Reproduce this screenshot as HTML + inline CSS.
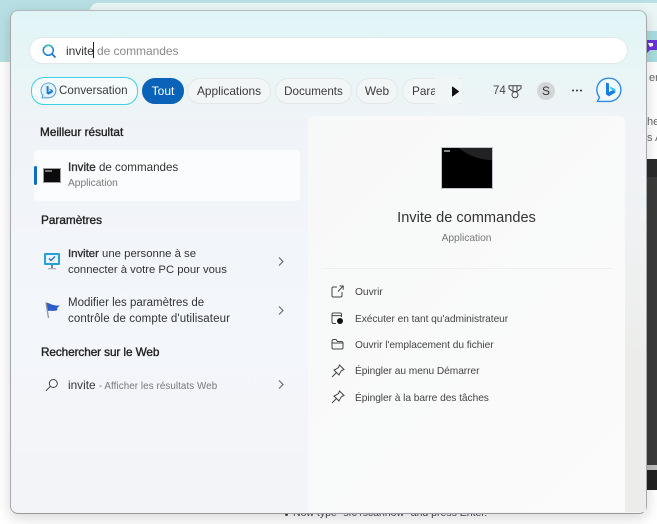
<!DOCTYPE html>
<html><head><meta charset="utf-8">
<style>
html,body{margin:0;padding:0}
body{width:657px;height:524px;overflow:hidden;position:relative;background:#fff;font-family:"Liberation Sans",sans-serif;color:#222}
#p{position:absolute;left:0;top:0;width:657px;height:524px;overflow:hidden;filter:blur(.35px)}
.a{position:absolute;white-space:nowrap}
.win{position:absolute;left:10px;top:10px;border-radius:8px;border:1px solid #b4b8b8;border-bottom-color:#9a9a9a;border-left-color:#a8a8a8;border-right-color:#a8a8a8;box-sizing:border-box;width:637px;height:504px;
background:linear-gradient(180deg,#e0f5f7 0%,#e9f5f6 12%,#f0f3f7 24%,#f3f6fb 60%,#f3f4f7 100%);box-shadow:0 4px 14px rgba(0,0,0,.16)}
.pill{position:absolute;top:78px;height:26px;border-radius:13px;border:1px solid #e4e7e8;box-sizing:border-box;font-size:11.8px;line-height:25px;text-align:center;color:#3a3a3a;background:#f3f6f7}
.t{font-size:11.5px;color:#333;line-height:16px}
.h{font-size:11.8px;color:#222;-webkit-text-stroke:.35px #222}
.b{-webkit-text-stroke:.35px #2b2b2b}
.m{font-size:10.2px;color:#444}
</style></head><body><div id="p">
<div class="a" style="left:0;top:0;width:657px;height:62px;background:#b8e0e4"></div>
<div class="a" style="left:90px;top:3px;width:567px;height:30px;background:#eaf6f6;border-radius:8px 0 0 0"></div>
<div class="a" style="left:640px;top:31px;width:17px;height:31px;background:#a9dde0"></div>
<svg class="a" style="left:645px;top:39px" width="12" height="15" viewBox="0 0 12 15"><path d="M1 1H12V11H5L2 14Z" fill="#6a35d8"/><path d="M3 4H8V7L5 8Z" fill="#fff"/></svg>
<div class="a" style="left:649px;top:72px;font-size:11px;color:#666">er</div>
<div class="a" style="left:647px;top:116px;font-size:11px;color:#666">he</div>
<div class="a" style="left:647px;top:132px;font-size:11px;color:#666">s A</div>
<div class="a" style="left:646px;top:159px;width:11px;height:306px;background:#3b3b3b"></div>
<div class="a" style="left:646px;top:159px;width:11px;height:18px;background:#2b2b2b"></div>
<div class="a" style="left:646px;top:465px;width:11px;height:5px;background:#bdbdbd"></div>
<div class="a" style="left:646px;top:470px;width:11px;height:20px;background:#222"></div>
<div class="a" style="left:285px;top:513px;width:3px;height:3px;border-radius:50%;background:#445"></div>
<div class="a" style="left:293px;top:507px;font-size:10.5px;color:#445">Now type "sfc /scannow" and press Enter.</div>

<div class="win"></div>
<div class="a" style="left:625px;top:116px;width:21px;height:396px;background:linear-gradient(180deg,rgba(236,238,236,0),#ecedeb 60%)"></div>

<!-- search box -->
<div class="a" style="left:30px;top:38px;width:597px;height:25px;background:#fff;border-radius:13px;box-shadow:0 0 0 1px #dfe9ea"></div>
<svg class="a" style="left:41px;top:43px" width="16" height="16" viewBox="0 0 16 16" fill="none"><circle cx="7.3" cy="7.3" r="5" stroke="#1a82d8" stroke-width="1.5"/><path d="M3.6 4A5 5 0 0 1 11 4" stroke="#35c0a5" stroke-width="1.5"/><path d="M11 11L14.5 14.5" stroke="#1a70d0" stroke-width="1.6"/></svg>
<div class="a" style="left:66px;top:42px;font-size:12px;line-height:14px;color:#8a8a8a;letter-spacing:-.05px"><span style="color:#333">invite</span><span style="display:inline-block;width:1px;height:16px;background:#222;vertical-align:-3px;margin-left:-1px"></span> de commandes</div>

<!-- pills -->
<div class="pill" style="left:31px;top:77px;width:107px;height:28px;border:1.5px solid #3fd0e6;line-height:26px;background:#f5fafb;text-align:left;padding-left:27px;font-size:11.6px;letter-spacing:.02px">Conversation</div>
<svg class="a" style="left:40px;top:82px" width="17" height="18" viewBox="0 0 17 18" fill="none"><path d="M8.5 1A7.4 7.4 0 1 1 8.5 15.8H2L3 13.5A7.4 7.4 0 0 1 8.5 1Z" fill="#e4f2fb" stroke="#5aa2e8" stroke-width="1.1"/><path d="M6.6 3.8L8.6 4.5V10L11.2 8.6L9.7 7.9L9.2 6.6L12.8 8.2V10.3L8.6 12.6L6.6 11.5Z" fill="#1a78d6"/></svg>
<div class="pill" style="left:142px;width:42px;background:#0a63b8;border-color:#0a63b8;color:#fff;font-size:12px">Tout</div>
<div class="pill" style="left:187px;width:84px;font-size:11.9px">Applications</div>
<div class="pill" style="left:275px;width:77px;font-size:11.6px">Documents</div>
<div class="pill" style="left:356px;width:42px;font-size:11.9px">Web</div>
<div class="pill" style="left:402px;width:60px;border-right:none;border-radius:13px 0 0 13px;text-align:left;padding-left:9px;overflow:hidden">Para</div>
<div class="a" style="left:435px;top:76px;width:24px;height:30px;background:#f0f5f6"></div>
<svg class="a" style="left:451px;top:86px" width="10" height="11" viewBox="0 0 10 11"><path d="M1.5 1L7.5 5.5L1.5 10Z" fill="#111" stroke="#111" stroke-linejoin="round"/></svg>
<div class="a" style="left:493px;top:85px;font-size:11.5px;color:#444">74</div>
<svg class="a" style="left:508px;top:85px" width="14" height="14" viewBox="0 0 14 14" fill="none" stroke="#444" stroke-width="1"><path d="M1 .8H13V3.5L9 6.5H5L1 3.5ZM5 1V6M9 1V6"/><circle cx="7" cy="9.8" r="3"/></svg>
<div class="a" style="left:537px;top:82px;width:18px;height:18px;border-radius:50%;background:#d3d6d7;text-align:center;font-size:12px;line-height:18px;color:#333">S</div>
<svg class="a" style="left:571px;top:88px" width="12" height="5"><circle cx="2" cy="2.5" r="1" fill="#333"/><circle cx="6" cy="2.5" r="1" fill="#333"/><circle cx="10" cy="2.5" r="1" fill="#333"/></svg>
<svg class="a" style="left:596px;top:77px" width="26" height="27" viewBox="0 0 26 27" fill="none"><path d="M13.3 1.2A11.6 11.6 0 1 1 13.3 24.4H1.5L3.6 20.3A11.6 11.6 0 0 1 13.3 1.2Z" fill="#f2f9fc" stroke="#2d8ce8" stroke-width="1.4"/><path d="M10 5.5L13 6.5V15L17 13L14.8 12L14 9.8L19.5 12.3V15.5L13 19.2L10 17.5Z" fill="#1a7fe0"/><path d="M14 9.8L19.5 12.3V15.5L17 13L14.8 12Z" fill="#33c6e8"/></svg>

<!-- left -->
<div class="a h" style="left:40px;top:125px">Meilleur résultat</div>
<div class="a" style="left:34px;top:150px;width:266px;height:51px;background:rgba(255,255,255,.7);border-radius:4px"></div>
<div class="a" style="left:34px;top:166px;width:2.5px;height:19px;background:#0f6cc4;border-radius:2px"></div>
<div class="a" style="left:43px;top:168px;width:18px;height:15px;background:#0b0b0b;border:1px solid #9a9da0;box-sizing:border-box"></div>
<div class="a" style="left:45px;top:170px;width:7px;height:2px;background:#777"></div>
<div class="a t" style="left:68px;top:160px;font-size:11.6px"><span class="b">Invite</span> de commandes</div>
<div class="a" style="left:68px;top:178px;font-size:10.2px;color:#777">Application</div>

<div class="a h" style="left:41px;top:213px">Paramètres</div>
<svg class="a" style="left:43px;top:252px" width="18" height="18" viewBox="0 0 18 18"><rect x="1" y="1" width="16" height="12" rx="1" fill="#27a0d8"/><rect x="3" y="3" width="12" height="8" fill="#e9f2f8"/><path d="M6 6.5L8 8.5L12 4.5" stroke="#1a70c0" stroke-width="1.3" fill="none"/><rect x="8" y="13" width="2" height="3" fill="#7a8a95"/><rect x="5" y="16" width="8" height="1.3" fill="#a8b2ba"/></svg>
<div class="a t" style="left:68px;top:246px;font-size:11.35px"><span class="b">Inviter</span> une personne à se<br><span style="line-height:17px;font-size:11.3px">connecter à votre PC pour vous</span></div>
<svg class="a" style="left:277px;top:256px" width="8" height="11" viewBox="0 0 8 11" fill="none"><path d="M2 1.5L6 5.5L2 9.5" stroke="#666" stroke-width="1.1"/></svg>

<svg class="a" style="left:43px;top:301px" width="19" height="20" viewBox="0 0 19 20"><path d="M3 1.5C7 2 9 5 17 4.5C14 6.5 14 8 14.5 9C10 11 7 9 5 10Z" fill="#2e5fc8"/><path d="M3 1.5L5.5 17" stroke="#8d96a0" stroke-width="1.3"/></svg>
<div class="a t" style="left:68px;top:295px">Modifier les paramètres de<br><span style="line-height:17px;letter-spacing:.1px">contrôle de compte d'utilisateur</span></div>
<svg class="a" style="left:277px;top:305px" width="8" height="11" viewBox="0 0 8 11" fill="none"><path d="M2 1.5L6 5.5L2 9.5" stroke="#666" stroke-width="1.1"/></svg>

<div class="a h" style="left:41px;top:345px;letter-spacing:-.1px">Rechercher sur le Web</div>
<svg class="a" style="left:45px;top:378px" width="14" height="14" viewBox="0 0 14 14" fill="none" stroke="#444" stroke-width="1"><circle cx="8.3" cy="5.5" r="4"/><path d="M5.3 8.4L1 12.8"/></svg>
<div class="a" style="left:68px;top:378px;font-size:11.8px;color:#333">invite <span style="font-size:9.8px;color:#777;letter-spacing:.08px">- Afficher les résultats Web</span></div>
<svg class="a" style="left:277px;top:379px" width="8" height="11" viewBox="0 0 8 11" fill="none"><path d="M2 1.5L6 5.5L2 9.5" stroke="#666" stroke-width="1.1"/></svg>

<!-- right panel -->
<div class="a" style="left:308px;top:116px;width:317px;height:396px;background:linear-gradient(135deg,#f7f8f8,#fbfbfb);border-radius:6px 6px 0 0"></div>
<div class="a" style="left:441px;top:147px;width:52px;height:42px;box-sizing:border-box;border:1.5px solid #c0c4cc;background:#000;overflow:hidden">
<div style="position:absolute;left:-2px;top:-40px;width:110px;height:52px;border-radius:0 0 0 70px;background:#222224"></div>
<div style="position:absolute;left:2px;top:2px;width:6px;height:1.5px;background:#888"></div>
</div>
<div class="a" style="left:308px;top:210px;width:317px;text-align:center;font-size:14.6px;color:#333">Invite de commandes</div>
<div class="a" style="left:308px;top:233px;width:317px;text-align:center;font-size:10.2px;color:#777">Application</div>
<div class="a" style="left:322px;top:268px;width:291px;height:1px;background:#eeeeee"></div>

<svg class="a" style="left:331px;top:285px" width="13" height="13" viewBox="0 0 13 13" fill="none" stroke="#444" stroke-width="1"><path d="M6 2H2.5A1.5 1.5 0 0 0 1 3.5V10.5A1.5 1.5 0 0 0 2.5 12H9.5A1.5 1.5 0 0 0 11 10.5V7"/><path d="M7 6.5L12 1.2M8.5 1H12.2V4.7"/></svg>
<div class="a m" style="left:355px;top:287px">Ouvrir</div>
<svg class="a" style="left:331px;top:312px" width="13" height="13" viewBox="0 0 13 13" fill="none" stroke="#444" stroke-width="1"><path d="M5 11.5H2.5A1.5 1.5 0 0 1 1 10V2.5A1.5 1.5 0 0 1 2.5 1H9A1.5 1.5 0 0 1 10.5 2.5V5M1 3.6H10.5"/><circle cx="9" cy="9" r="3" fill="#111" stroke="none"/></svg>
<div class="a m" style="left:355px;top:314px;letter-spacing:-.05px">Exécuter en tant qu'administrateur</div>
<svg class="a" style="left:331px;top:338px" width="13" height="12" viewBox="0 0 13 12" fill="none" stroke="#444" stroke-width="1"><path d="M1 3V9.5A1.5 1.5 0 0 0 2.5 11H10.5A1.5 1.5 0 0 0 12 9.5V4.5A1.5 1.5 0 0 0 10.5 3.5H6.5L5 1.5H2.5A1.5 1.5 0 0 0 1 3ZM1 5H12"/></svg>
<div class="a m" style="left:355px;top:340px;letter-spacing:-.05px">Ouvrir l'emplacement du fichier</div>
<svg class="a" style="left:331px;top:364px" width="14" height="14" viewBox="0 0 14 14" fill="none" stroke="#444" stroke-width="1"><path d="M8.5 1L13 5.5L10.5 6.5L8.5 9.8L8 11L3 6L4.2 5.5L7.5 3.5ZM5.5 8.5L1 13"/></svg>
<div class="a m" style="left:355px;top:366px;letter-spacing:-.05px">Épingler au menu Démarrer</div>
<svg class="a" style="left:331px;top:390px" width="14" height="14" viewBox="0 0 14 14" fill="none" stroke="#444" stroke-width="1"><path d="M8.5 1L13 5.5L10.5 6.5L8.5 9.8L8 11L3 6L4.2 5.5L7.5 3.5ZM5.5 8.5L1 13"/></svg>
<div class="a m" style="left:355px;top:393px;letter-spacing:-.05px">Épingler à la barre des tâches</div>
</div></body></html>
